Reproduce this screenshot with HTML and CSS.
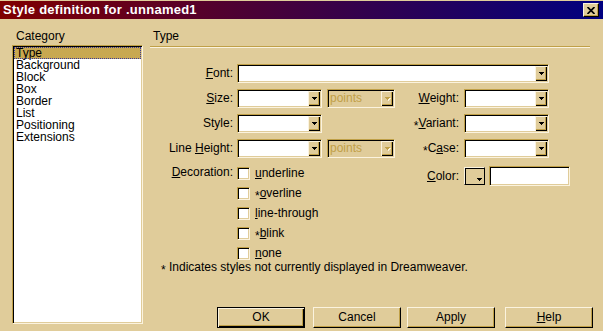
FILE: index.html
```html
<!DOCTYPE html>
<html>
<head>
<meta charset="utf-8">
<title>Style definition for .unnamed1</title>
<link rel="stylesheet" href="styles.css">
</head>
<body>
<div class="window">
  <div class="titlebar">
    <span class="title">Style definition for .unnamed1</span>
    <span class="close"><svg width="8" height="7" viewBox="0 0 8 7"><path d="M0.5 0 L7.5 7 M7.5 0 L0.5 7" stroke="#000" stroke-width="1.7" fill="none"/></svg></span>
  </div>
  <div class="main">
    <div class="leftcol">
      <div class="caption">Category</div>
      <div class="listbox">
        <div class="item selected">Type</div>
        <div class="item">Background</div>
        <div class="item">Block</div>
        <div class="item">Box</div>
        <div class="item">Border</div>
        <div class="item">List</div>
        <div class="item">Positioning</div>
        <div class="item">Extensions</div>
      </div>
    </div>
    <div class="rightcol">
      <div class="heading">Type</div>
      <div class="rule"></div>
      <div class="form">
        <div class="label"><u>F</u>ont:</div>
        <div class="combo span4"><span class="drop"><svg class="arrow" width="5" height="3"><rect x="0" y="0" width="5" height="1"/><rect x="1" y="1" width="3" height="1"/><rect x="2" y="2" width="1" height="1"/></svg></span></div>

        <div class="label"><u>S</u>ize:</div>
        <div class="combo"><span class="drop"><svg class="arrow" width="5" height="3"><rect x="0" y="0" width="5" height="1"/><rect x="1" y="1" width="3" height="1"/><rect x="2" y="2" width="1" height="1"/></svg></span></div>
        <div class="combo disabled"><span class="val">points</span><span class="drop"><svg class="arrow" width="6" height="4"><rect class="hl" x="1" y="1" width="5" height="1"/><rect class="hl" x="2" y="2" width="3" height="1"/><rect class="hl" x="3" y="3" width="1" height="1"/><rect x="0" y="0" width="5" height="1"/><rect x="1" y="1" width="3" height="1"/><rect x="2" y="2" width="1" height="1"/></svg></span></div>
        <div class="label label2"><u>W</u>eight:</div>
        <div class="combo"><span class="drop"><svg class="arrow" width="5" height="3"><rect x="0" y="0" width="5" height="1"/><rect x="1" y="1" width="3" height="1"/><rect x="2" y="2" width="1" height="1"/></svg></span></div>

        <div class="label">Style:</div>
        <div class="combo"><span class="drop"><svg class="arrow" width="5" height="3"><rect x="0" y="0" width="5" height="1"/><rect x="1" y="1" width="3" height="1"/><rect x="2" y="2" width="1" height="1"/></svg></span></div>
        <div class="empty"></div>
        <div class="label label2"><span class="ast">*</span><u>V</u>ariant:</div>
        <div class="combo"><span class="drop"><svg class="arrow" width="5" height="3"><rect x="0" y="0" width="5" height="1"/><rect x="1" y="1" width="3" height="1"/><rect x="2" y="2" width="1" height="1"/></svg></span></div>

        <div class="label">Line <u>H</u>eight:</div>
        <div class="combo"><span class="drop"><svg class="arrow" width="5" height="3"><rect x="0" y="0" width="5" height="1"/><rect x="1" y="1" width="3" height="1"/><rect x="2" y="2" width="1" height="1"/></svg></span></div>
        <div class="combo disabled"><span class="val">points</span><span class="drop"><svg class="arrow" width="6" height="4"><rect class="hl" x="1" y="1" width="5" height="1"/><rect class="hl" x="2" y="2" width="3" height="1"/><rect class="hl" x="3" y="3" width="1" height="1"/><rect x="0" y="0" width="5" height="1"/><rect x="1" y="1" width="3" height="1"/><rect x="2" y="2" width="1" height="1"/></svg></span></div>
        <div class="label label2"><span class="ast">*</span>C<u>a</u>se:</div>
        <div class="combo"><span class="drop"><svg class="arrow" width="5" height="3"><rect x="0" y="0" width="5" height="1"/><rect x="1" y="1" width="3" height="1"/><rect x="2" y="2" width="1" height="1"/></svg></span></div>

        <div class="label declabel"><u>D</u>ecoration:</div>
        <div class="checks">
          <div class="check"><span class="box"></span><span class="ctext"><u>u</u>nderline</span></div>
          <div class="check"><span class="box"></span><span class="ctext"><span class="ast">*</span><u>o</u>verline</span></div>
          <div class="check"><span class="box"></span><span class="ctext"><u>l</u>ine-through</span></div>
          <div class="check"><span class="box"></span><span class="ctext"><span class="ast">*</span><u>b</u>link</span></div>
          <div class="check"><span class="box"></span><span class="ctext"><u>n</u>one</span></div>
        </div>
        <div class="label label2 colorlabel"><u>C</u>olor:</div>
        <div class="colorgroup">
          <span class="swatch"><svg class="arrow" width="5" height="3"><rect x="0" y="0" width="5" height="1"/><rect x="1" y="1" width="3" height="1"/><rect x="2" y="2" width="1" height="1"/></svg></span>
          <span class="textfield"></span>
        </div>
      </div>
      <div class="note"><span class="ast">*</span> Indicates styles not currently displayed in Dreamweaver.</div>
      <div class="buttons">
        <div class="btn default">OK</div>
        <div class="btn cancel">Cancel</div>
        <div class="btn apply">Apply</div>
        <div class="btn help"><u>H</u>elp</div>
      </div>
    </div>
  </div>
</div>
</body>
</html>
```

FILE: styles.css
```css
:root {
  --face: #e0cc9a;
  --hl: #fbf3df;
  --shadow: #c0a048;
  --sel: #c8a850;
}

body {
  margin: 0;
  font-family: "Liberation Sans", Arial, sans-serif;
  font-size: 12px;
  color: #000;
}

.window {
  width: 603px;
  height: 331px;
  box-sizing: border-box;
  padding-top: 1px;
  background: var(--face);
  overflow: hidden;
}

.titlebar {
  height: 18px;
  display: flex;
  align-items: center;
  justify-content: space-between;
  padding: 0 4px 0 3px;
  background: linear-gradient(to right, #800000, #000080);
}

.title {
  color: #fff;
  font-weight: bold;
  font-size: 13px;
  letter-spacing: 0.25px;
  line-height: 18px;
}

.close {
  width: 16px;
  height: 14px;
  box-sizing: border-box;
  background: var(--face);
  border: 1px solid;
  border-color: var(--hl) #000 #000 var(--hl);
  box-shadow: inset -1px -1px 0 var(--shadow);
  display: flex;
  align-items: center;
  justify-content: center;
}

.main {
  display: flex;
  padding: 10px 0 0 12px;
}

.leftcol {
  width: 131px;
  flex: none;
}

.caption {
  line-height: 14px;
  padding-left: 4px;
}

.listbox {
  margin-top: 2px;
  height: 279px;
  box-sizing: border-box;
  background: #fff;
  border: 1px solid;
  border-color: var(--shadow) var(--hl) var(--hl) var(--shadow);
  box-shadow: inset 1px 1px 0 #000, inset -1px -1px 0 var(--face);
  padding: 1px;
}

.item {
  height: 12px;
  line-height: 12px;
  padding-left: 2px;
}

.item.selected {
  background: var(--sel);
  outline: 1px dotted #3a3a9a;
  outline-offset: -1px;
}

.rightcol {
  flex: 1;
  margin-left: 7px;
}

.heading {
  line-height: 14px;
  padding-left: 3px;
}

.rule {
  margin: 3px 13px 0 0;
  border-top: 1px solid var(--shadow);
  border-bottom: 1px solid var(--hl);
}

.form {
  margin-top: 16px;
  display: grid;
  grid-template-columns: 87px 85px 73px 69px 85px;
  grid-template-rows: 19px 19px 19px 19px auto;
  row-gap: 6px;
  align-items: start;
}

.label {
  line-height: 19px;
  text-align: right;
  padding-right: 4px;
  white-space: nowrap;
}

.label2 {
  padding-right: 5px;
}

.ast {
  display: inline-block;
  vertical-align: -3px;
}

.combo {
  height: 19px;
  box-sizing: border-box;
  background: #fff;
  border: 1px solid;
  border-color: var(--shadow) var(--hl) var(--hl) var(--shadow);
  box-shadow: inset 1px 1px 0 #000, inset -1px -1px 0 var(--face);
  padding: 1px 1px 1px 2px;
  display: flex;
  align-items: center;
  width: 85px;
}

.combo.span4 {
  grid-column: 2 / 6;
  width: auto;
}

.combo.disabled {
  width: 68px;
  margin-left: 5px;
  background: var(--face);
}

.val {
  flex: 1;
  color: var(--shadow);
  line-height: 15px;
}

.drop {
  margin-left: auto;
  width: 12px;
  height: 15px;
  box-sizing: border-box;
  background: var(--face);
  box-shadow: inset 1px 1px 0 var(--hl), inset -1px -1px 0 #000, inset -2px -2px 0 var(--shadow);
  display: flex;
  align-items: center;
  justify-content: center;
}

.arrow {
  display: block;
  fill: #000;
}

.disabled .arrow {
  fill: var(--shadow);
  margin-left: 1px;
}

.disabled .arrow .hl {
  fill: var(--hl);
}

.declabel,
.colorlabel {
  margin-top: 2px;
}

.declabel {
  line-height: 12px;
}

.colorlabel {
  line-height: 20px;
}

.checks {
  grid-column: 2 / 4;
  margin-top: 3px;
  display: flex;
  flex-direction: column;
  gap: 7px;
}

.check {
  display: flex;
  align-items: flex-start;
  gap: 5px;
  height: 13px;
}

.ctext {
  line-height: 12px;
  white-space: nowrap;
}

.box {
  flex: none;
  width: 13px;
  height: 13px;
  box-sizing: border-box;
  background: #fff;
  border: 1px solid;
  border-color: var(--shadow) var(--hl) var(--hl) var(--shadow);
  box-shadow: inset 1px 1px 0 #000, inset -1px -1px 0 var(--face);
}

.colorgroup {
  margin-top: 2px;
  display: flex;
  align-items: center;
  gap: 4px;
}

.swatch {
  flex: none;
  width: 21px;
  height: 18px;
  box-sizing: border-box;
  background: var(--face);
  border: 1px solid;
  border-color: var(--hl) #000 #000 var(--hl);
  box-shadow: inset 1px 1px 0 #000;
  display: flex;
  align-items: flex-end;
  justify-content: flex-end;
  padding: 0 2px 3px 0;
}

.textfield {
  flex: none;
  width: 81px;
  height: 20px;
  box-sizing: border-box;
  background: #fff;
  border: 1px solid;
  border-color: var(--shadow) var(--hl) var(--hl) var(--shadow);
  box-shadow: inset 1px 1px 0 #000, inset -1px -1px 0 var(--face);
}

.note {
  padding-left: 11px;
  line-height: 14px;
}

.buttons {
  display: flex;
  margin: 30px 0 0 67px;
}

.btn {
  width: 88px;
  height: 21px;
  box-sizing: border-box;
  background: var(--face);
  border: 1px solid;
  border-color: var(--hl) #000 #000 var(--hl);
  box-shadow: inset -1px -1px 0 var(--shadow);
  text-align: center;
  line-height: 19px;
}

.btn.default {
  border-color: #000;
  box-shadow: inset 1px 1px 0 var(--hl), inset -1px -1px 0 #000, inset -2px -2px 0 var(--shadow);
}

.btn.cancel {
  margin-left: 8px;
}

.btn.apply {
  margin-left: 6px;
}

.btn.help {
  margin-left: 10px;
}
```
